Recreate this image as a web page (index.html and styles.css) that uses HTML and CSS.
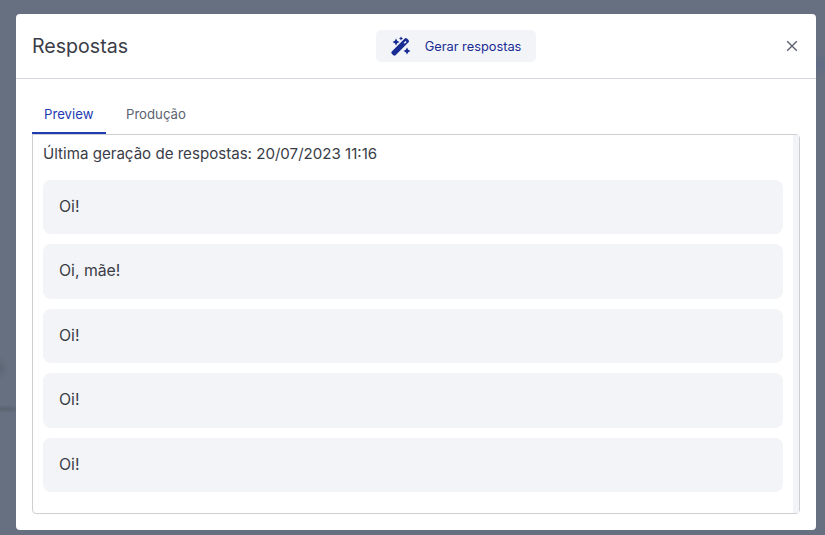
FILE: index.html
```html
<!DOCTYPE html>
<html lang="pt-BR">
<head>
    <meta charset="UTF-8">
    <meta name="viewport" content="width=device-width, initial-scale=1.0">
    <title>Respostas</title>
    <link rel="stylesheet" href="styles.css">
</head>
<body>
    <div class="modal">
        <header class="modal-header">
            <h2 class="modal-title">Respostas</h2>
            <button class="generate-button">
                <svg class="wand-icon" viewBox="0 0 20 20" width="20" height="20">
                    <path fill-rule="evenodd" d="M1 15.200 13.500 2.700a1.900 1.900 0 0 1 2.700 0l1.100 1.100a1.900 1.900 0 0 1 0 2.700L4.800 19a1.900 1.900 0 0 1-2.700 0L1 17.900a1.900 1.900 0 0 1 0-2.700Zm11.700-8.400 1 1 1.900-1.900-1-1Z"/>
                    <path d="M5 2.500 6.200 4.800 8.500 6 6.200 7.200 5 9.500 3.800 7.200 1.500 6 3.800 4.800Z"/>
                    <path d="M10 .5l.7 1.300 1.300.7-1.300.7-.7 1.300-.7-1.300L8 2.500l1.300-.7Z"/>
                    <path d="M16 11.500l1.200 2.300 2.300 1.200-2.300 1.200-1.200 2.300-1.200-2.300-2.300-1.200 2.300-1.200Z"/>
                </svg>
                <span>Gerar respostas</span>
            </button>
            <button class="close-button" aria-label="Fechar">
                <svg viewBox="0 0 12 12" width="12" height="12">
                    <path d="M1.200 1.200 10.800 10.800M10.800 1.200 1.200 10.800"/>
                </svg>
            </button>
        </header>

        <div class="modal-body">
            <nav class="tabs">
                <a class="tab active">Preview</a>
                <a class="tab">Produção</a>
            </nav>

            <div class="tab-panel">
                <div class="panel-content">
                    <p class="last-run">Última geração de respostas: 20/07/2023 11:16</p>
                    <div class="answer">Oi!</div>
                    <div class="answer">Oi, mãe!</div>
                    <div class="answer">Oi!</div>
                    <div class="answer">Oi!</div>
                    <div class="answer">Oi!</div>
                </div>
                <div class="scroll-track"></div>
            </div>
        </div>
    </div>
</body>
</html>
```

FILE: styles.css
```css
:root {
    --backdrop: #667080;
    --text: #3a3d47;
    --muted: #5c6270;
    --blue: #1e3bb3;
    --navy: #182c94;
    --soft: #f3f4f8;
    --line: #d5d6dc;
}

* {
    margin: 0;
    padding: 0;
    box-sizing: border-box;
    font-family: 'Inter', 'Liberation Sans', sans-serif;
}

body {
    background:
        radial-gradient(ellipse 14px 12px at 820px 65px, #5f6a85, transparent),
        radial-gradient(ellipse 20px 4px at 6px 409px, #5b6270, transparent),
        radial-gradient(ellipse 8px 12px at 0 368px, #5e6674, transparent),
        var(--backdrop);
    height: 100vh;
    overflow: hidden;
    padding: 14px 9px 5px 16px;
}

.modal {
    background: white;
    border-radius: 4px;
    height: 516px;
    display: flex;
    flex-direction: column;
}

.modal-header {
    height: 65px;
    flex: none;
    border-bottom: 1px solid var(--line);
    padding: 0 16px;
    display: grid;
    grid-template-columns: 344px 160px 1fr;
    align-items: center;
}

.modal-title {
    font-size: 19.6px;
    font-weight: 400;
    color: var(--text);
}

.generate-button {
    width: 160px;
    height: 32px;
    border: none;
    border-radius: 5px;
    background: var(--soft);
    color: var(--navy);
    font-size: 12.8px;
    display: flex;
    align-items: center;
    justify-content: center;
    gap: 14px;
}

.wand-icon {
    fill: var(--navy);
}

.close-button {
    justify-self: end;
    width: 16px;
    height: 16px;
    border: none;
    background: none;
    display: flex;
    align-items: center;
    justify-content: center;
}

.close-button path {
    stroke: var(--muted);
    stroke-width: 1.4;
    fill: none;
}

.modal-body {
    flex: 1;
    padding: 19px 16px 16px;
    display: flex;
    flex-direction: column;
}

.tabs {
    display: flex;
    flex: none;
    height: 36px;
}

.tab {
    padding: 0 12px;
    font-size: 13.2px;
    line-height: 32px;
    color: var(--muted);
}

.tab.active {
    padding: 0 12.5px 0 12px;
    margin-right: 8px;
    color: var(--blue);
    border-bottom: 2px solid var(--blue);
    height: 36px;
}

.tab-panel {
    flex: 1;
    border: 1px solid #cfcfd3;
    border-radius: 0 4px 4px 4px;
    display: flex;
}

.panel-content {
    flex: 1;
    padding: 10px 10px 0;
}

.last-run {
    font-size: 15.1px;
    line-height: 18px;
    color: var(--text);
    margin-bottom: 16.5px;
}

.answer {
    height: 54.5px;
    margin-bottom: 10px;
    padding: 0 16px;
    border-radius: 8px;
    background: var(--soft);
    font-size: 15.8px;
    line-height: 53.8px;
    color: var(--text);
}

.scroll-track {
    width: 6px;
    background: var(--soft);
}
```
